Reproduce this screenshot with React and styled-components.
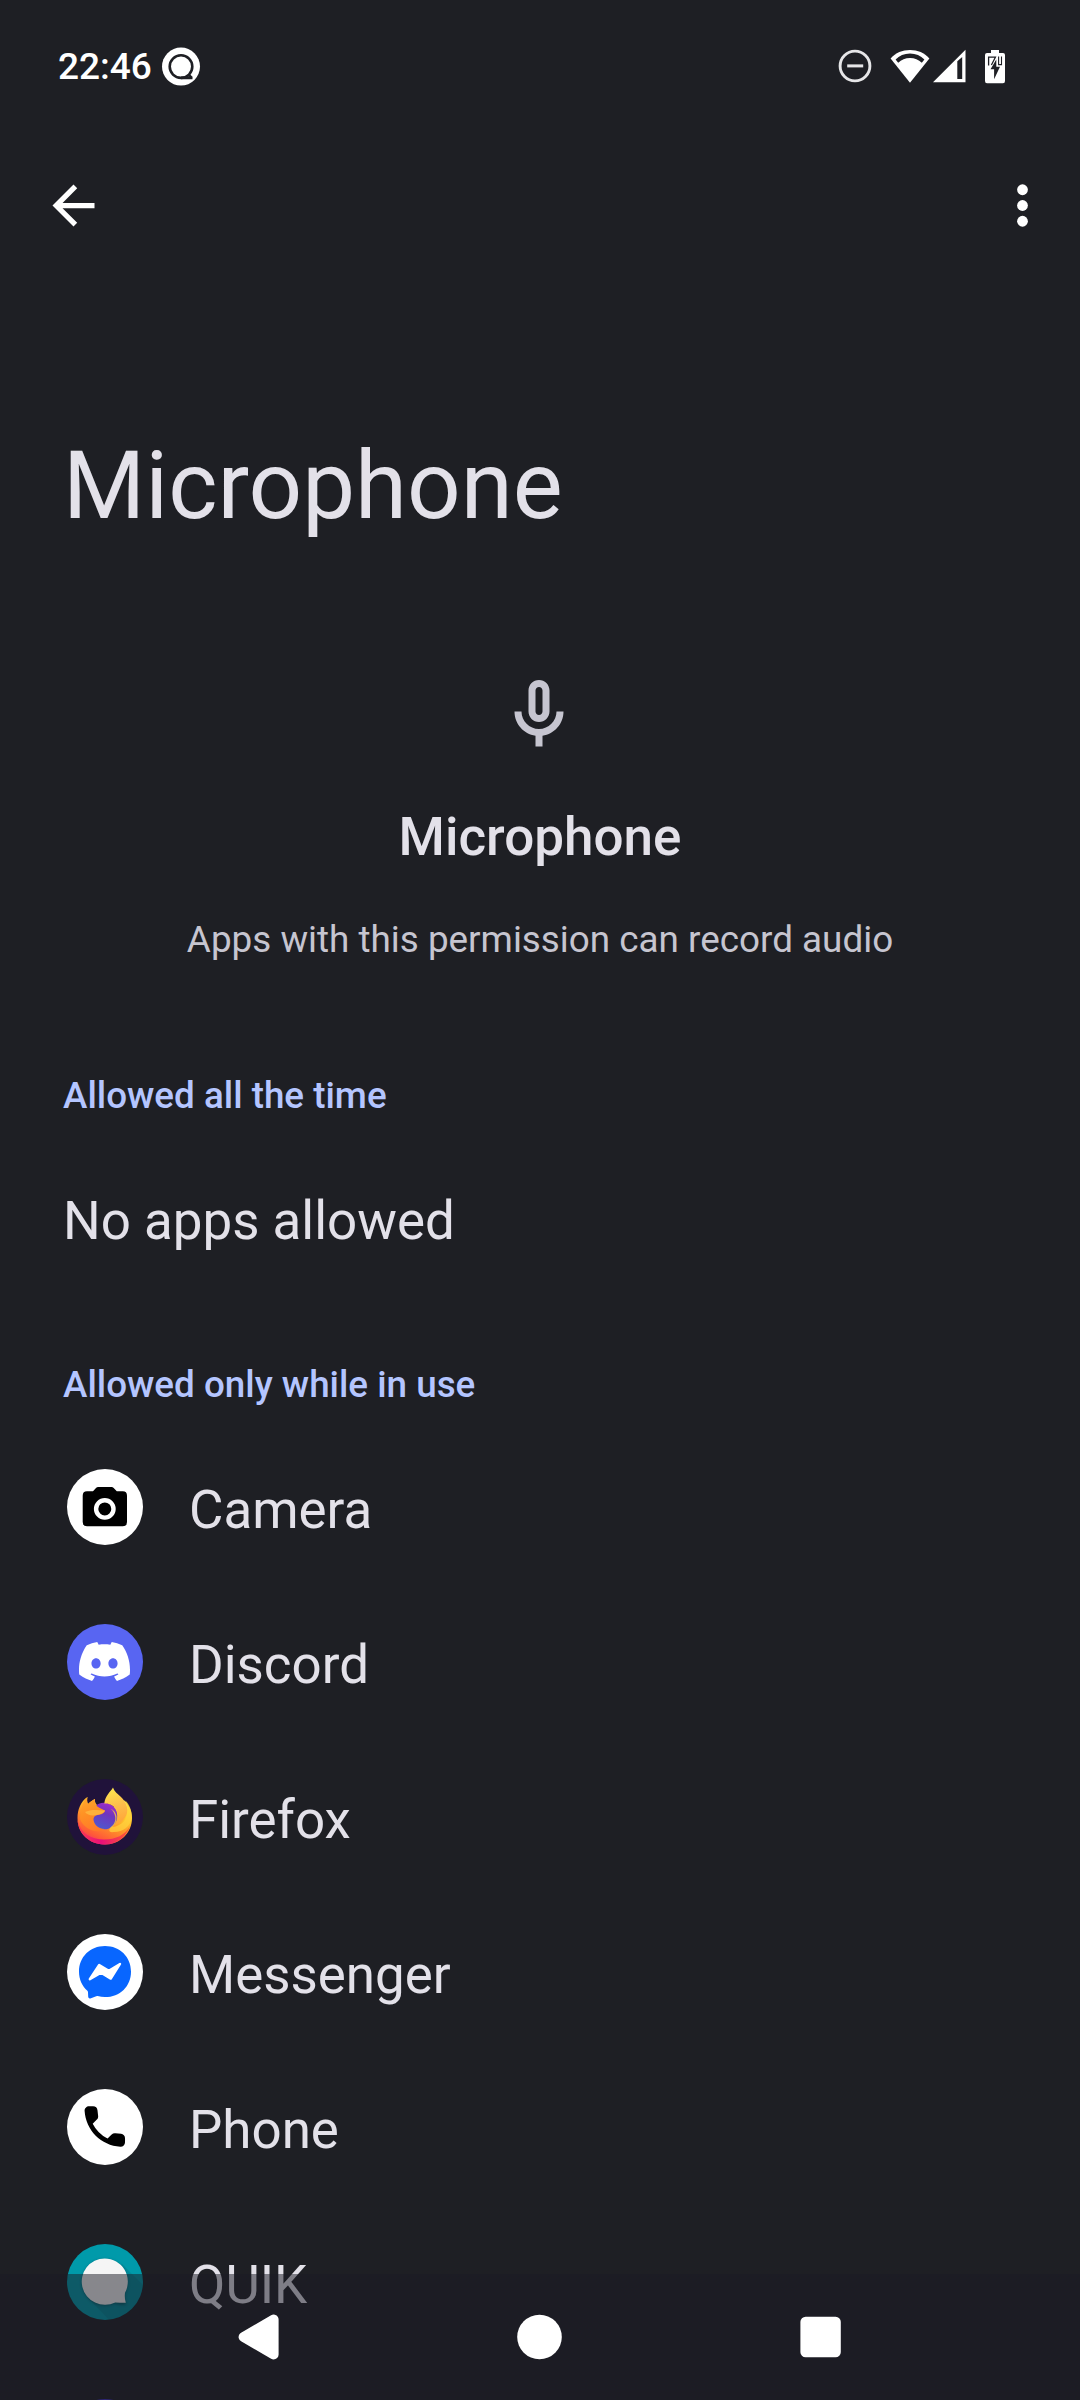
import React from 'react';
import styled, { createGlobalStyle } from 'styled-components';
import { SiDiscord } from 'react-icons/si';

const apps = [
  { id: 1, name: 'Camera', icon: <CameraIcon /> },
  { id: 2, name: 'Discord', icon: <DiscordIcon /> },
  { id: 3, name: 'Firefox', icon: <FirefoxIcon /> },
  { id: 4, name: 'Messenger', icon: <MessengerIcon /> },
  { id: 5, name: 'Phone', icon: <PhoneIcon /> },
  { id: 6, name: 'QUIK', icon: <QuikIcon /> },
];

const App = () => {
  return (
    <Screen>
      <GlobalStyle />
      <StatusBar>
        <Clock>22:46</Clock>
        <BadgeIcon />
        <StatusIcons />
      </StatusBar>
      <Toolbar>
        <IconButton aria-label="Back">
          <svg width="63" height="63" viewBox="0 0 24 24" fill="#fff">
            <path d="M20 11H7.83l5.59-5.59L12 4l-8 8 8 8 1.41-1.41L7.83 13H20v-2z" />
          </svg>
        </IconButton>
        <IconButton aria-label="More">
          <svg width="63" height="63" viewBox="0 0 24 24" fill="#fff">
            <circle cx="12" cy="6" r="2.05" />
            <circle cx="12" cy="12" r="2.05" />
            <circle cx="12" cy="18" r="2.05" />
          </svg>
        </IconButton>
      </Toolbar>
      <Title>Microphone</Title>
      <Summary>
        <MicSvg width="84" height="84" viewBox="0 0 24 24" fill="#c6c5d0">
          <path d="M12 14c1.66 0 3-1.34 3-3V5c0-1.66-1.34-3-3-3S9 3.34 9 5v6c0 1.66 1.34 3 3 3zm-1-9c0-.55.45-1 1-1s1 .45 1 1v6c0 .55-.45 1-1 1s-1-.45-1-1V5zm6 6c0 2.76-2.24 5-5 5s-5-2.24-5-5H5c0 3.53 2.61 6.43 6 6.92V21h2v-3.08c3.39-.49 6-3.39 6-6.92h-2z" />
        </MicSvg>
        <SummaryTitle>Microphone</SummaryTitle>
        <SummaryText>Apps with this permission can record audio</SummaryText>
      </Summary>
      <SectionLabel>Allowed all the time</SectionLabel>
      <Row>
        <RowText>No apps allowed</RowText>
      </Row>
      <SectionLabel>Allowed only while in use</SectionLabel>
      {apps.map(app => (
        <Row key={app.id}>
          <AppIcon>{app.icon}</AppIcon>
          <RowText>{app.name}</RowText>
        </Row>
      ))}
      <Row>
        <AppIcon>
          <svg width="76" height="76" viewBox="0 0 76 76">
            <circle cx="38" cy="38" r="38" fill="#3f2fc4" />
          </svg>
        </AppIcon>
      </Row>
      <NavBar>
        <NavButton aria-label="Back">
          <svg width="46" height="46" viewBox="0 0 46 46" fill="#fff" stroke="#fff" strokeWidth="10" strokeLinejoin="round">
            <path d="M7.6 23L37.6 5.6V40.4z" />
          </svg>
        </NavButton>
        <NavButton aria-label="Home">
          <svg width="46" height="46" viewBox="0 0 46 46" fill="#fff">
            <circle cx="22.5" cy="23" r="22.3" />
          </svg>
        </NavButton>
        <NavButton aria-label="Recents">
          <svg width="46" height="46" viewBox="0 0 46 46" fill="#fff">
            <rect x="2.4" y="2.8" width="40.4" height="40.4" rx="5.2" />
          </svg>
        </NavButton>
      </NavBar>
    </Screen>
  );
};

function BadgeIcon() {
  return (
    <svg width="40" height="40" viewBox="0 0 40 40">
      <circle cx="20" cy="20.6" r="19" fill="#fff" />
      <circle cx="20" cy="20.6" r="11.3" fill="none" stroke="#1e1f24" strokeWidth="2.6" />
      <path d="M20 31.9H31.5M27.8 28.8L30.8 31.8" stroke="#1e1f24" strokeWidth="2.6" />
    </svg>
  );
}

// do not disturb, wifi, mobile signal, battery
function StatusIcons() {
  return (
    <StatusGroup>
      <svg width="34" height="34" viewBox="0 0 34 34">
        <circle cx="17" cy="17" r="14.9" fill="none" stroke="#e6e6e8" strokeWidth="2.9" />
        <rect x="9.2" y="15.4" width="16" height="3" fill="#e6e6e8" />
      </svg>
      <WifiSvg width="40" height="34" viewBox="0 0 40 34">
        <path d="M20 33.7L.6 9.6C5.6 3.7 12.4 1 20 1s14.4 2.7 19.4 8.6z" fill="#fff" />
        <path d="M5.6 10.6C9.3 6.5 14.2 4.5 20 4.5s10.7 2 14.4 6.1L31.8 13.8C28.6 10.5 24.6 9 20 9S11.4 10.5 8.2 13.8z" fill="#1e1f24" />
      </WifiSvg>
      <SignalSvg width="33" height="34" viewBox="0 0 33 34">
        <path d="M0 33.3L32.5 .7V33.3z" fill="#fff" />
        <path d="M24.3 12.3L29.2 8V30H24.3z" fill="#1e1f24" />
      </SignalSvg>
      <svg width="20" height="35" viewBox="0 0 20 35">
        <path d="M6 1H14V4H18Q20 4 20 6V32Q20 34.3 18 34.3H2Q0 34.3 0 32V6Q0 4 2 4H6z" fill="#fff" />
        <path d="M3.6 16.4V8.2H10.4L6.4 16" fill="none" stroke="#1e1f24" strokeWidth="1.3" />
        <path d="M13.6 7.6V15.6H16.5V7.6" fill="none" stroke="#1e1f24" strokeWidth="1.1" />
        <path d="M11.3 10.5L5.5 20.2H9.1V30.2L15 17.8H11.3z" fill="#1e1f24" />
      </svg>
    </StatusGroup>
  );
}

function CameraIcon() {
  return (
    <svg width="76" height="76" viewBox="0 0 76 76">
      <circle cx="38" cy="38" r="38" fill="#fff" />
      <path
        d="M31.2 18H44.4Q45.8 18 46.7 19L49.8 22.3H55.8Q60 22.3 60 26.7V53Q60 57.3 55.8 57.3H20Q15.7 57.3 15.7 53V26.7Q15.7 22.3 20 22.3H26L29 19Q29.9 18 31.2 18z"
        fill="#000"
      />
      <circle cx="37.8" cy="39.9" r="8.7" fill="none" stroke="#fff" strokeWidth="4.4" />
    </svg>
  );
}

function DiscordIcon() {
  return (
    <DiscordCircle>
      <SiDiscord size={51} />
    </DiscordCircle>
  );
}

function FirefoxIcon() {
  return (
    <svg width="76" height="76" viewBox="0 0 76 76">
      <defs>
        <linearGradient id="ffBody" x1="0.85" y1="0.1" x2="0.35" y2="1">
          <stop offset="0" stopColor="#fff44f" />
          <stop offset="0.3" stopColor="#ffc62c" />
          <stop offset="0.6" stopColor="#ff8a2a" />
          <stop offset="0.85" stopColor="#ff5a38" />
          <stop offset="1" stopColor="#f0306b" />
        </linearGradient>
        <linearGradient id="ffFace" x1="0.2" y1="0" x2="0.5" y2="1">
          <stop offset="0" stopColor="#ffa72b" />
          <stop offset="0.5" stopColor="#ff8f24" />
          <stop offset="1" stopColor="#ff7a2a" />
        </linearGradient>
        <linearGradient id="ffRim" x1="0" y1="0" x2="1" y2="0">
          <stop offset="0" stopColor="#ff3d4d" />
          <stop offset="0.45" stopColor="#e8107a" />
          <stop offset="1" stopColor="#ff5a30" />
        </linearGradient>
        <linearGradient id="ffGlobe" x1="0.7" y1="0" x2="0.3" y2="1">
          <stop offset="0" stopColor="#a22ccb" />
          <stop offset="0.4" stopColor="#7035bd" />
          <stop offset="1" stopColor="#4c5bcf" />
        </linearGradient>
        <linearGradient id="ffFlame" x1="0.4" y1="0" x2="0.6" y2="1">
          <stop offset="0" stopColor="#ffe54d" />
          <stop offset="0.5" stopColor="#fdbd4b" />
          <stop offset="1" stopColor="#ffa436" />
        </linearGradient>
      </defs>
      <circle cx="38" cy="38" r="38" fill="#20123a" />
      <path
        d="M20.5 18C19.8 20.5 20 23 21 25C23 23 25.5 21 28 20C27.8 22 28 24 29.5 25.5L37 30L48 28L57.5 21.5C62 26 65 32 65 39C65 54 53 65.5 38 65.5C22 65.5 10.5 54 10.5 39C10.5 31 13.5 22.5 20.5 18z"
        fill="url(#ffBody)"
      />
      <path d="M10.6 41C13 54 24 60.5 37 60.5C49 60.5 58 56 63 47C59 58 50 65.5 38 65.5C23 65.5 11 55 10.6 41z" fill="url(#ffRim)" />
      <circle cx="37" cy="37" r="13.3" fill="url(#ffGlobe)" />
      <path
        d="M20.5 18C19.8 20.5 20 23 21 25C23 23 25.5 21 28 20C27.6 22.5 28.3 25 30 27.3C33 29.5 36 30.5 38 31.5C37.5 34.5 34 35.5 30.5 36C27.5 36.5 26.3 38.5 26.5 41C27.5 46.5 32 50 37.5 50C32 55 18 52 13 40C13.5 31 15 23 20.5 18z"
        fill="url(#ffFace)"
      />
      <path d="M18 33C22 30.5 30 30.5 38 31.5C37 34.5 33 35.3 29.5 36C25 37 20 36 18 33z" fill="#ffb13b" />
      <path
        d="M46 8.5C44 12 38 17 37.3 24.5C42 24 47 26.5 49.5 31C52 36 51 42 47.5 46C54 44.5 60 39 60.5 31C60 26 58 22 55 19C51 15 47.5 13 46 8.5z"
        fill="url(#ffFlame)"
      />
      <path d="M43.5 29.5C47 31 49 34 49.5 37.5C49.8 41.5 48.5 45 45.5 48C54 47 61 41 61 30C60 27 59 24 58.5 21.5C62 25 65 31 64.8 38C64 47 56 53 47 53C40 54 42 49 45.5 46.5C50 42 49 34 43.5 29.5z" fill="#ffd13d" opacity=".75" />
    </svg>
  );
}

function MessengerIcon() {
  return (
    <svg width="76" height="76" viewBox="0 0 76 76">
      <circle cx="38" cy="38" r="38" fill="#fff" />
      <path
        d="M38 12C23 12 12 23 12 37.7C12 45.4 15.2 52 20.4 56.7Q21 57.3 21 58.2L21.2 62.8Q21.4 65.3 24 64.3L29.2 62.2Q29.9 61.9 30.7 62.1Q34.2 63.1 38 63.1C53 63.1 64 52.2 64 37.7C64 23 53 12 38 12z"
        fill="#0866ff"
      />
      <path
        d="M22.8 45.2L32.2 31L41.8 36.8L53 29.9L43.8 44.6L34 38.7z"
        fill="#fff"
        stroke="#fff"
        strokeWidth="2.4"
        strokeLinejoin="round"
      />
    </svg>
  );
}

function PhoneIcon() {
  return (
    <svg width="76" height="76" viewBox="0 0 76 76">
      <circle cx="38" cy="38" r="38" fill="#fff" />
      <path
        transform="translate(10.8 10.5) scale(2.25)"
        d="M19.23 15.26l-2.54-.29a1.99 1.99 0 0 0-1.64.57l-1.84 1.84a15.045 15.045 0 0 1-6.59-6.59l1.85-1.85c.43-.43.64-1.03.57-1.64l-.29-2.52a2.001 2.001 0 0 0-1.99-1.77H5.03c-1.13 0-2.07.94-2 2.07.53 8.54 7.36 15.36 15.89 15.89 1.13.07 2.07-.87 2.07-2v-1.73c.01-1.01-.75-1.86-1.76-1.98z"
      />
    </svg>
  );
}

function QuikIcon() {
  return (
    <svg width="76" height="76" viewBox="0 0 76 76">
      <defs>
        <clipPath id="quikClip">
          <circle cx="38" cy="38" r="38" />
        </clipPath>
        <filter id="quikBlur">
          <feGaussianBlur stdDeviation="1.5" />
        </filter>
      </defs>
      <g clipPath="url(#quikClip)">
        <rect width="76" height="76" fill="#009aaa" />
        <path d="M55 20L90 55L76 90L56 90L21 54z" fill="#004f5c" opacity=".18" />
        <path d="M37.7 15.5a23 23 0 1 0 10 43.8Q54 61.5 59 60.5Q57 54 58 49A23 23 0 0 0 37.7 15.5z" fill="#00333b" opacity=".55" filter="url(#quikBlur)" />
        <path d="M37.7 14.4a23.2 23.2 0 1 0 10.5 44Q53 58.5 58.8 58.8Q57.3 54 58 48.7A23.2 23.2 0 0 0 37.7 14.4z" fill="#f5f5f5" />
      </g>
    </svg>
  );
}

const GlobalStyle = createGlobalStyle`
  body {
    margin: 0;
    background-color: #1e1f24;
  }
`;

const Screen = styled.div`
  position: relative;
  width: 1080px;
  height: 2400px;
  overflow: hidden;
  background-color: #1e1f24;
  color: #e3e1e9;
  font-family: Roboto, sans-serif;
`;

const StatusBar = styled.div`
  display: flex;
  align-items: center;
  box-sizing: border-box;
  height: 132px;
  padding: 0 75px 0 58px;
`;

const Clock = styled.div`
  width: 93px;
  margin-right: 10px;
  color: #fff;
  font-size: 37px;
  font-weight: 500;
`;

const StatusGroup = styled.div`
  display: flex;
  align-items: center;
  margin-left: auto;
`;

const WifiSvg = styled.svg`
  margin-left: 18px;
`;

const SignalSvg = styled.svg`
  margin: 0 19px 0 3px;
`;

const MicSvg = styled.svg`
  margin-right: 2px;
`;

const Toolbar = styled.div`
  display: flex;
  align-items: center;
  justify-content: space-between;
  height: 147px;
  padding: 0 26px 0 42px;
`;

const IconButton = styled.button`
  display: flex;
  padding: 0;
  border: 0;
  background: none;
`;

const Title = styled.h1`
  margin: 144px 63px 0;
  font-size: 94.2px;
  font-weight: 400;
  line-height: 126px;
`;

const Summary = styled.div`
  display: flex;
  flex-direction: column;
  align-items: center;
  padding: 124px 63px 46px;
`;

const SummaryTitle = styled.h2`
  margin: 49px 0;
  font-size: 53px;
  font-weight: 500;
  line-height: 62px;
`;

const SummaryText = styled.p`
  margin: 0;
  padding-top: 1px;
  color: #c6c5d0;
  font-size: 36.85px;
  line-height: 43px;
`;

const SectionLabel = styled.h3`
  margin: 0;
  padding: 67px 63px 24px;
  color: #b4c5ff;
  font-size: 36.8px;
  font-weight: 500;
  line-height: 43px;
`;

const Row = styled.div`
  display: flex;
  align-items: center;
  height: 155px;
  padding: 0 63px;
`;

const AppIcon = styled.div`
  display: flex;
  width: 122px;
  padding-left: 4px;
  margin-bottom: 1px;
`;

const RowText = styled.span`
  padding-top: 5px;
  font-size: 52.9px;
  line-height: 62px;
`;

const DiscordCircle = styled.div`
  display: flex;
  align-items: center;
  justify-content: center;
  box-sizing: border-box;
  width: 76px;
  height: 76px;
  padding: 0 1px 1px 0;
  border-radius: 50%;
  background-color: #5865f2;
  color: #fff;
`;

const NavBar = styled.div`
  position: absolute;
  right: 0;
  bottom: 0;
  left: 0;
  display: flex;
  justify-content: center;
  height: 126px;
  background-color: rgba(26, 25, 36, 0.5);
`;

const NavButton = styled.button`
  display: flex;
  align-items: center;
  justify-content: center;
  width: 281px;
  padding: 0;
  border: 0;
  background: none;
`;

export default App;
